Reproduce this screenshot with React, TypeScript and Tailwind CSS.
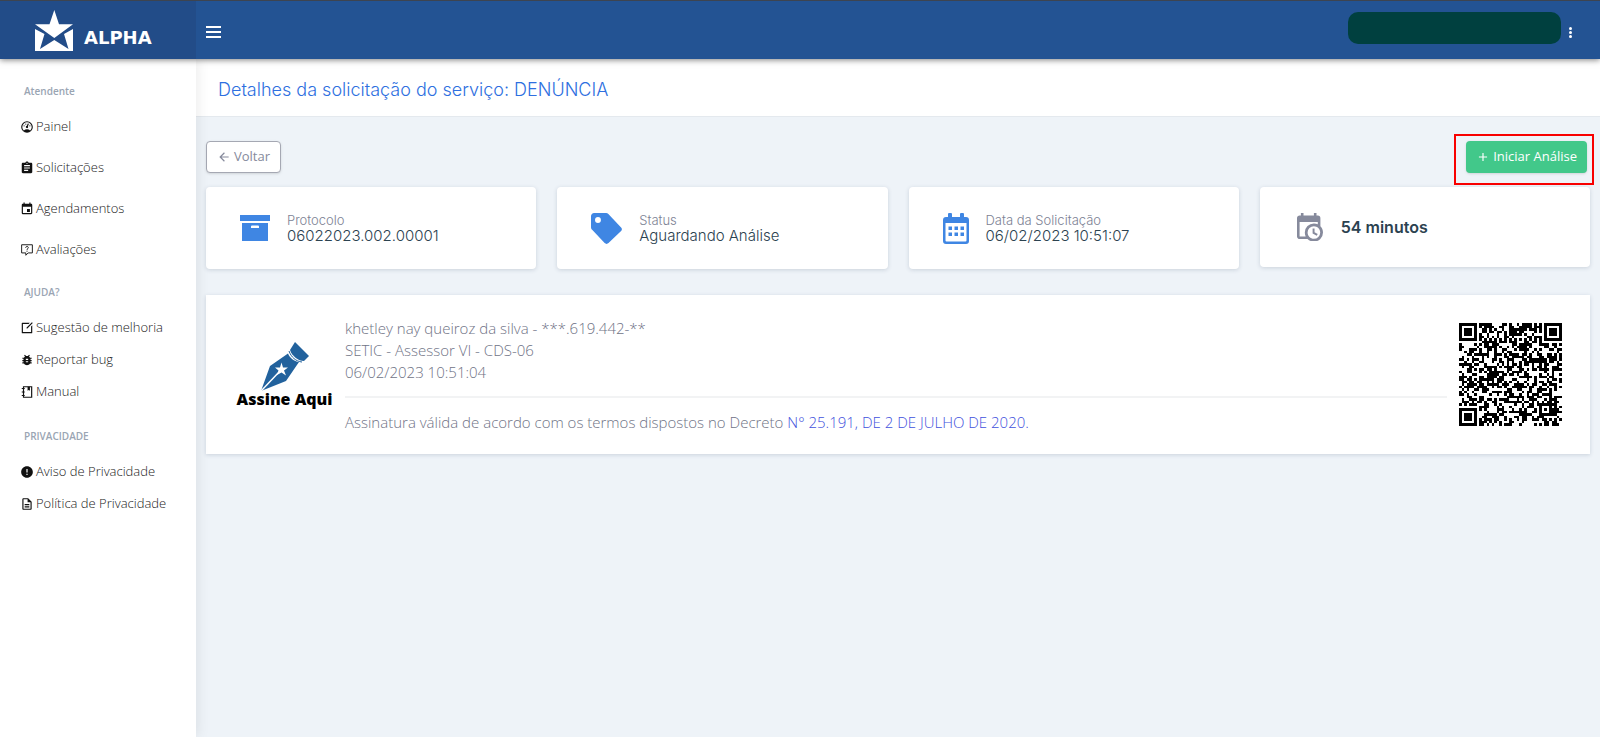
import type { ReactNode } from 'react'
import clsx from 'clsx'
import { MdAdd, MdArrowBack, MdAssignment, MdBugReport, MdError, MdEvent, MdOutlineDescription } from 'react-icons/md'
import { RiEditBoxLine } from 'react-icons/ri'

const GaugeIcon = () => (
  <svg viewBox="0 0 24 24" className="size-3.5" fill="currentColor">
    <path d="M12,2A10,10 0 0,0 2,12A10,10 0 0,0 12,22A10,10 0 0,0 22,12A10,10 0 0,0 12,2M12,4A8,8 0 0,1 20,12C20,14.4 19,16.5 17.3,18C15.9,16.7 14,16 12,16C10,16 8.2,16.7 6.7,18C5,16.5 4,14.4 4,12A8,8 0 0,1 12,4M14,5.89C13.62,5.9 13.26,6.15 13.1,6.54L11.81,9.77L11.71,10C11,10.13 10.41,10.6 10.14,11.26C9.73,12.29 10.23,13.45 11.26,13.86C12.29,14.27 13.45,13.77 13.86,12.74C14.12,12.08 14,11.32 13.57,10.76L13.67,10.5L14.96,7.29C15.17,6.75 14.92,6.17 14.41,5.96C14.28,5.91 14.15,5.89 14,5.89M10,6A1,1 0 0,0 9,7A1,1 0 0,0 10,8A1,1 0 0,0 11,7A1,1 0 0,0 10,6M7,9A1,1 0 0,0 6,10A1,1 0 0,0 7,11A1,1 0 0,0 8,10A1,1 0 0,0 7,9M17,9A1,1 0 0,0 16,10A1,1 0 0,0 17,11A1,1 0 0,0 18,10A1,1 0 0,0 17,9Z" />
  </svg>
)

const QuestionBubbleIcon = () => (
  <svg viewBox="0 0 24 24" className="size-3.5" fill="none" stroke="currentColor" strokeWidth="1.6">
    <path d="M2.800 3H21.200V17H14L10 21V17H2.800Z" />
    <path d="M9.800 8.200C9.800 5 14.400 5.200 14.200 8C14 9.800 12 9.800 12 11.800M12 13.200V15" />
  </svg>
)

const NotebookIcon = () => (
  <svg viewBox="0 0 24 24" className="size-3.5" fill="none" stroke="currentColor" strokeWidth="2">
    <path d="M6 3H20V21H6Z" />
    <path d="M3 6H8M3 12H8M3 18H8" />
    <path d="M13 3H17V10L15 8.5L13 10Z" fill="currentColor" stroke="none" />
  </svg>
)

const ArchiveIcon = () => (
  <svg viewBox="0 0 30 26" className="w-[30px] shrink-0 text-[#3f86e3]" fill="currentColor">
    <path d="M0 0H30V6H0Z" />
    <path fillRule="evenodd" d="M2 8H28V26H2ZM12 10.5A1 1 0 0 0 11 11.5V13H19V11.5A1 1 0 0 0 18 10.5Z" />
  </svg>
)

const TagIcon = () => (
  <svg viewBox="2 2 20 20" className="w-[31px] shrink-0 text-[#3f86e3]" fill="currentColor">
    <path d="M6.5,8.4A1.9,1.9 0 0,1 4.6,6.5A1.9,1.9 0 0,1 6.5,4.6A1.9,1.9 0 0,1 8.4,6.5A1.9,1.9 0 0,1 6.5,8.4M21.41,11.3L13.2,2.58C12.8,2.22 12.3,2 11.8,2H4C2.89,2 2,2.89 2,4V11C2,11.8 2.22,12.3 2.59,12.7L10.8,21.41C11.5,22.1 12.6,22.1 13.3,21.41L21.41,13.6C22.1,12.9 22.1,12 21.41,11.3Z" />
  </svg>
)

const CalendarIcon = () => (
  <svg viewBox="0 0 26 31" className="w-[26px] shrink-0 text-[#3f86e3]" fill="currentColor">
    <path fillRule="evenodd" d="M3 4H5V1.5A1.5 1.5 0 0 1 9 1.5V4H17V1.5A1.5 1.5 0 0 1 21 1.5V4H23A3 3 0 0 1 26 7V28A3 3 0 0 1 23 31H3A3 3 0 0 1 0 28V7A3 3 0 0 1 3 4ZM2.5 10V27.5A1 1 0 0 0 3.5 28.5H22.5A1 1 0 0 0 23.5 27.5V10Z" />
    <path d="M5.5 13.5H9V17H5.5ZM11.5 13.5H15V17H11.5ZM17.5 13.5H21V17H17.5ZM5.5 19.5H9V23H5.5ZM11.5 19.5H15V23H11.5ZM17.5 19.5H21V23H17.5Z" />
  </svg>
)

const CalendarClockIcon = () => (
  <svg viewBox="3 1 20 22" className="w-[26px] shrink-0 text-[#868a9c]" fill="currentColor">
    <path d="M15,13H16.5V15.82L18.94,17.23L18.19,18.53L15,16.69V13M19,8H5V19H9.67C9.24,18.09 9,17.07 9,16A7,7 0 0,1 16,9C17.07,9 18.09,9.24 19,9.67V8M5,21C3.89,21 3,20.1 3,19V5C3,3.89 3.89,3 5,3H6V1H8V3H16V1H18V3H19A2,2 0 0,1 21,5V11.1C22.24,12.36 23,14.09 23,16A7,7 0 0,1 16,23C14.09,23 12.36,22.24 11.1,21H5M16,11.15A4.85,4.85 0 0,0 11.15,16C11.15,18.68 13.32,20.85 16,20.85A4.85,4.85 0 0,0 20.85,16C20.85,13.32 18.68,11.15 16,11.15Z" />
  </svg>
)

const AlphaLogo = () => (
  <svg viewBox="0 0 38 42" className="h-[42px] w-[38px]" fill="#fff">
    <path d="M19.300 1L24 15.300H38L19.300 29L0 15.300H14.500Z" />
    <path d="M0 20L9.500 25L5 40L19.300 31L33.500 40L29 25L38 20V42H0Z" />
  </svg>
)

const PenLogo = () => (
  <svg viewBox="0 0 48 49" className="h-[49px] w-12">
    <path d="M0 49L9 24L27 11.500C29 16 33 19.500 38 20L25 39Z" fill="#22629d" />
    <path d="M34 0L48 14L43 19C37 19 31 14 29 8Z" fill="#22629d" />
    <path d="M28 9C30 15 35 19.500 41 20" fill="none" stroke="#22629d" strokeWidth="1" />
    <path d="M0 49L19 29" stroke="#fff" strokeWidth="1.500" />
    <path d="M20.500 20.500L22 25.500L27 25.500L23 28.500L25 33.500L20.500 30.500L16 33L17.500 28.500L14 25.500L19 25.500Z" fill="#fff" />
  </svg>
)

const QR_SIZE = 41

const finderAt = (x: number, y: number, fx: number, fy: number) => {
  const d = Math.max(Math.abs(x - fx), Math.abs(y - fy))
  return d > 4 ? null : d !== 2 && d !== 4
}

const buildQrPath = () => {
  let seed = 25191
  let path = ''
  for (let y = 0; y < QR_SIZE; y++) {
    for (let x = 0; x < QR_SIZE; x++) {
      seed = (seed * 1103515245 + 12345) % 2147483648
      let dark = seed / 2147483648 > 0.5
      if (y === 6 || x === 6) dark = (x + y) % 2 === 0
      const align = Math.max(Math.abs(x - 34), Math.abs(y - 34))
      if (align <= 2) dark = align !== 1
      dark = finderAt(x, y, 3, 3) ?? finderAt(x, y, 37, 3) ?? finderAt(x, y, 3, 37) ?? dark
      if (dark) path += `M${x} ${y}h1v1h-1z`
    }
  }
  return path
}

const qrPath = buildQrPath()

const menu = [
  {
    title: 'Atendente',
    titleClass: '',
    itemClass: 'h-[41px]',
    items: [
      { label: 'Painel', icon: <GaugeIcon /> },
      { label: 'Solicitações', icon: <MdAssignment /> },
      { label: 'Agendamentos', icon: <MdEvent /> },
      { label: 'Avaliações', icon: <QuestionBubbleIcon /> },
    ],
  },
  {
    title: 'AJUDA?',
    titleClass: 'mt-[7px] mb-[5px]',
    itemClass: 'h-8',
    items: [
      { label: 'Sugestão de melhoria', icon: <RiEditBoxLine /> },
      { label: 'Reportar bug', icon: <MdBugReport /> },
      { label: 'Manual', icon: <NotebookIcon /> },
    ],
  },
  {
    title: 'PRIVACIDADE',
    titleClass: 'mt-[13px] mb-[5px]',
    itemClass: 'h-8',
    items: [
      { label: 'Aviso de Privacidade', icon: <MdError /> },
      { label: 'Política de Privacidade', icon: <MdOutlineDescription /> },
    ],
  },
]

const Header = () => (
  <header className="relative z-20 flex h-[59px] border-t border-[#3d4450] bg-[#235393] shadow-[0_1px_6px_rgba(0,0,0,0.5)]">
    <div className="flex w-[196px] shrink-0 items-center gap-[11px] bg-[#224c88] pl-[35px]">
      <AlphaLogo />
      <span className="pt-4 font-['DejaVu_Sans',sans-serif] text-lg leading-6 font-bold text-white">ALPHA</span>
    </div>
    <div className="flex flex-1 items-center justify-between pr-7 pl-2.5 pb-1">
      <button aria-label="Menu" className="flex w-[15px] flex-col gap-[3px] pt-2">
        <span className="h-0.5 w-full bg-white"></span>
        <span className="h-0.5 w-full bg-white"></span>
        <span className="h-0.5 w-full bg-white"></span>
      </button>
      <div className="flex items-center gap-2">
        <div className="h-8 w-[213px] rounded-[10px] bg-[#00403f]"></div>
        <button aria-label="Mais opções" className="flex flex-col gap-px pt-2">
          <span className="size-[3px] rounded-full bg-white"></span>
          <span className="size-[3px] rounded-full bg-white"></span>
          <span className="size-[3px] rounded-full bg-white"></span>
        </button>
      </div>
    </div>
  </header>
)

const Sidebar = () => (
  <aside className="z-10 w-[196px] shrink-0 bg-white pt-[17px] shadow-[2px_0_12px_rgba(0,0,0,0.08)]">
    {menu.map((section) => (
      <nav key={section.title} aria-label={section.title}>
        <h2 className={clsx('flex h-[30px] items-center pl-6 text-[10px] font-semibold text-[#9aa5b3]', section.titleClass)}>{section.title}</h2>
        {section.items.map((item) => (
          <a key={item.label} href="#" className={clsx('flex items-center gap-0.5 pl-5 text-[13px] font-light text-[#222]', section.itemClass)}>
            <span className="text-sm text-[#111]">{item.icon}</span>
            {item.label}
          </a>
        ))}
      </nav>
    ))}
  </aside>
)

const InfoCard = ({ icon, label, value }: { icon: ReactNode; label: string; value: string }) => (
  <div className="flex h-[82px] items-center gap-[17px] rounded bg-white px-[34px] shadow-[0_1px_4px_rgba(60,80,110,0.2)]">
    {icon}
    <div className="font-[Inter,sans-serif]">
      <p className="text-[13px] leading-4 font-light text-[#7d8294]">{label}</p>
      <p className="text-[15px] leading-4 font-light text-[#2c4250]">{value}</p>
    </div>
  </div>
)

const App = () => {
  return (
    <div className="flex min-h-screen flex-col bg-[#eef3f8] font-['Open_Sans',sans-serif]">
      <Header />
      <div className="flex flex-1">
        <Sidebar />
        <div className="min-w-0 flex-1">
          <div className="flex h-[58px] items-center border-b border-[#e4e9ee] bg-white pt-1 pl-[22px]">
            <h1 className="font-[Inter,sans-serif] text-lg font-light text-[#2e6fe0]">Detalhes da solicitação do serviço: DENÚNCIA</h1>
          </div>

          <main className="px-2.5 pt-6">
            <div className="flex items-center justify-between pr-[3px]">
              <button className="flex h-8 items-center gap-[3px] rounded border border-[#a5a8b3] bg-white px-2.5 text-[13px] text-[#868a9c] shadow-sm">
                <MdArrowBack className="size-3.5" />
                Voltar
              </button>
              <div className="relative">
                <button className="flex h-8 items-center gap-[3px] rounded bg-[#42c88a] px-2.5 text-[13px] text-white shadow-sm">
                  <MdAdd className="size-3.5" />
                  Iniciar Análise
                </button>
                {/* highlight around the action */}
                <div className="pointer-events-none absolute -top-[7px] -right-[7px] -bottom-3 -left-3 border-2 border-[#f80000]"></div>
              </div>
            </div>

            <div className="mt-3.5 grid grid-cols-4 items-start gap-[21px]">
              <InfoCard icon={<ArchiveIcon />} label="Protocolo" value="06022023.002.00001" />
              <InfoCard icon={<TagIcon />} label="Status" value="Aguardando Análise" />
              <InfoCard icon={<CalendarIcon />} label="Data da Solicitação" value="06/02/2023 10:51:07" />
              <div className="flex h-20 items-center gap-[18px] rounded bg-white px-[37px] shadow-[0_1px_4px_rgba(60,80,110,0.2)]">
                <CalendarClockIcon />
                <p className="font-[Inter,sans-serif] text-base font-semibold text-[#2c4250]">54 minutos</p>
              </div>
            </div>

            <section className="mt-[26px] flex h-[159px] items-center bg-white pr-7 pl-[30px] shadow-[0_1px_4px_rgba(60,80,110,0.2)]">
              <div className="flex w-[97px] shrink-0 flex-col items-center">
                <PenLogo />
                <span className="font-['Open_Sans',sans-serif] text-base leading-4 font-extrabold whitespace-nowrap text-black">Assine Aqui</span>
              </div>
              <div className="ml-3 flex-1 text-[15px] leading-[22px] font-light text-[#6f7386]">
                <p>khetley nay queiroz da silva - ***.619.442-**</p>
                <p>SETIC - Assessor VI - CDS-06</p>
                <p>06/02/2023 10:51:04</p>
                <hr className="my-[13px] border-t-2 border-[#f2f3f4]" />
                <p>
                  Assinatura válida de acordo com os termos dispostos no Decreto{' '}
                  <a href="#" className="text-[#3f51dd]">N° 25.191, DE 2 DE JULHO DE 2020.</a>
                </p>
              </div>
              <svg viewBox="0 0 41 41" className="ml-3 size-[103px] shrink-0" shapeRendering="crispEdges" role="img" aria-label="QR Code">
                <path d={qrPath} fill="#000" />
              </svg>
            </section>
          </main>
        </div>
      </div>
    </div>
  )
}

export default App
